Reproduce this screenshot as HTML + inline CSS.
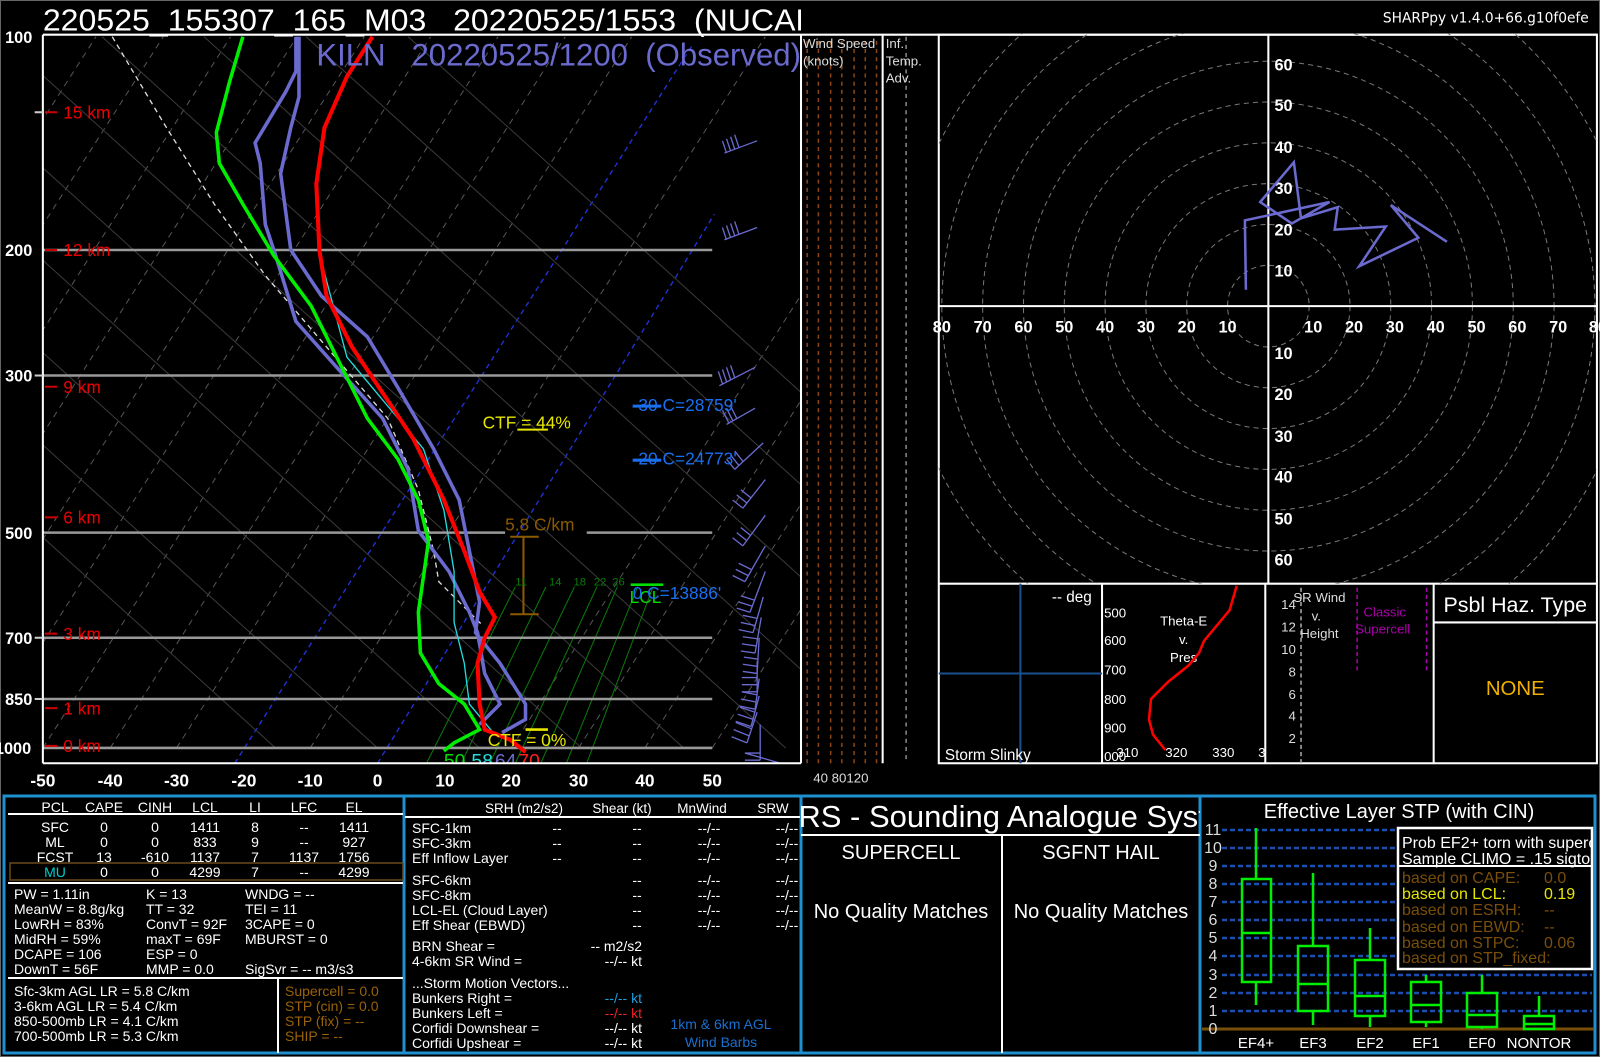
<!DOCTYPE html>
<html><head><meta charset="utf-8"><style>
html,body{margin:0;padding:0;background:#000;}
svg{display:block;font-family:"Liberation Sans",sans-serif;}
</style></head><body>
<svg width="1600" height="1057" viewBox="0 0 1600 1057" xmlns="http://www.w3.org/2000/svg">
<rect width="1600" height="1057" fill="#000"/>
<rect x="0.5" y="0.5" width="1599" height="1056" fill="none" stroke="#666" stroke-width="1"/>
<g transform="scale(1.0204)">
<defs>
<clipPath id="sk"><rect x="42" y="34" width="743" height="714"/></clipPath>
<clipPath id="hd"><rect x="920" y="33" width="645" height="539"/></clipPath>
<clipPath id="hdr"><rect x="0" y="0" width="785" height="40"/></clipPath>
</defs>
<g clip-path="url(#sk)">
<g stroke="#555" stroke-width="1" stroke-dasharray="6,5" fill="none">
<line x1="-417" y1="733" x2="29" y2="36"/><line x1="-352" y1="733" x2="94" y2="36"/>
<line x1="-286" y1="733" x2="160" y2="36"/><line x1="-220" y1="733" x2="226" y2="36"/>
<line x1="-155" y1="733" x2="291" y2="36"/><line x1="-89" y1="733" x2="357" y2="36"/>
<line x1="-24" y1="733" x2="422" y2="36"/><line x1="42" y1="733" x2="488" y2="36"/>
<line x1="108" y1="733" x2="554" y2="36"/><line x1="173" y1="733" x2="619" y2="36"/>
<line x1="304" y1="733" x2="750" y2="36"/>
<line x1="501" y1="733" x2="947" y2="36"/><line x1="567" y1="733" x2="1013" y2="36"/>
<line x1="632" y1="733" x2="1078" y2="36"/><line x1="698" y1="733" x2="1144" y2="36"/>
</g>
<g stroke="#2233dd" stroke-width="1.3" stroke-dasharray="5,4" fill="none">
<line x1="230" y1="748" x2="678" y2="45"/><line x1="370" y1="748" x2="700" y2="210"/>
</g>
<g stroke="#3a3a3a" stroke-width="1" fill="none">
<line x1="-500" y1="36" x2="270" y2="733"/><line x1="-400" y1="36" x2="370" y2="733"/>
<line x1="-300" y1="36" x2="470" y2="733"/><line x1="-200" y1="36" x2="570" y2="733"/>
<line x1="-100" y1="36" x2="670" y2="733"/><line x1="0" y1="36" x2="770" y2="733"/>
<line x1="100" y1="36" x2="870" y2="733"/><line x1="200" y1="36" x2="970" y2="733"/>
<line x1="300" y1="36" x2="1070" y2="733"/><line x1="400" y1="36" x2="1170" y2="733"/>
</g>
<g stroke="#0a7a0a" stroke-width="1" fill="none">
<line x1="418" y1="748" x2="505" y2="575"/><line x1="452" y1="748" x2="535" y2="575"/>
<line x1="480" y1="748" x2="563" y2="575"/><line x1="505" y1="748" x2="585" y2="575"/>
<line x1="530" y1="748" x2="605" y2="575"/><line x1="555" y1="748" x2="625" y2="575"/>
<line x1="575" y1="748" x2="640" y2="575"/>
</g>
<g stroke="#999" stroke-width="2.5">
<line x1="42" y1="245" x2="698" y2="245"/><line x1="42" y1="368" x2="698" y2="368"/>
<line x1="42" y1="522" x2="495" y2="522"/><line x1="575" y1="522" x2="698" y2="522"/>
<line x1="42" y1="625" x2="698" y2="625"/><line x1="42" y1="685" x2="698" y2="685"/>
<line x1="42" y1="733" x2="698" y2="733"/>
</g>
<polyline fill="none" stroke="#ddd" stroke-width="1.3" stroke-dasharray="5,4" points="110,36 160,120 210,200 260,270 320,340 380,410 410,480 425,540 430,570 460,600 472,612"/>
<polyline fill="none" stroke="#6a6acf" stroke-width="3.5" points="290,36 290,70 280,90 250,140 255,160 260,220 270,250 290,315 330,360 375,410 400,460 410,520 440,560 460,600 468,620 475,660 490,690 470,710"/>
<polyline fill="none" stroke="#6a6acf" stroke-width="3.5" points="293,36 293,95 285,125 275,170 285,245 315,290 360,330 390,380 425,440 450,490 460,540 470,590 466,620 490,650 515,690 515,705 492,718"/>
<polyline fill="none" stroke="#22dddd" stroke-width="1.3" points="312,245 340,350 415,440 435,500 445,560 445,610 455,650 460,690 485,720"/>
<polyline fill="none" stroke="#ff0000" stroke-width="4" points="365,36 340,75 318,125 310,180 313,245 320,290 345,340 375,385 405,430 435,490 455,540 470,580 485,605 475,625 468,650 470,690 475,715 500,725 515,737"/>
<polyline fill="none" stroke="#00ee00" stroke-width="3.5" points="238,36 225,80 212,130 215,160 238,200 268,250 305,300 330,350 360,410 390,450 410,490 420,530 410,600 412,640 430,670 455,690 470,715 445,728 435,736"/>
<g stroke="#6a6acf" stroke-width="1.3" fill="none">
<path d="M710,150 L742,138 M712,150 l-4,-12 M716,148 l-4,-12 M720,146 l-4,-12 M724,144 l-4,-12"/>
<path d="M710,235 L742,223 M712,235 l-4,-12 M716,233 l-4,-12 M720,231 l-4,-12 M724,229 l-4,-12"/>
<path d="M705,378 L740,360 M708,376 l-4,-12 M712,374 l-4,-12 M716,372 l-4,-12 M720,370 l-4,-12"/>
<path d="M712,416 L740,400 M714,414 l-6,-12 M718,412 l-6,-12 M722,410 l-6,-12"/>
<path d="M720,460 l28,-26 M720,460 l-8,-10 M724,456 l-8,-10 M728,452 l-8,-10"/>
<path d="M728,498 l22,-28 M728,498 l-10,-8 M732,493 l-10,-8 M736,488 l-10,-8"/>
<path d="M728,535 l22,-30 M728,535 l-10,-8 M732,530 l-10,-8 M736,525 l-10,-8"/>
<path d="M730,570 l20,-35 M730,570 l-12,-6 M733,564 l-12,-6 M736,558 l-12,-6"/>
<path d="M735,600 l15,-40 M735,600 l-13,-4 M737,594 l-13,-4 M739,588 l-13,-4"/>
<path d="M738,620 l10,-35 M738,620 l-14,-3 M740,613 l-14,-3 M742,606 l-14,-3"/>
<path d="M740,640 l6,-35 M740,640 l-14,-2 M741,633 l-14,-2 M742,626 l-14,-2"/>
<path d="M742,660 l2,-35 M742,660 l-14,-2 M742,653 l-14,-2 M743,646 l-14,-2"/>
<path d="M742,678 l0,-30 M742,678 l-15,0 M742,671 l-15,0 M742,664 l-15,0"/>
<path d="M740,695 l4,-30 M740,695 l-15,-3 M741,688 l-15,-3 M742,681 l-15,-3"/>
<path d="M736,712 l8,-30 M736,712 l-15,-5 M738,705 l-15,-5 M740,698 l-15,-5"/>
<path d="M732,728 l10,-30 M732,728 l-15,-6 M734,721 l-15,-6 M736,714 l-15,-6"/>
<path d="M745,745 l0,-35 M745,745 l-15,0 M745,738 l-15,0 L765,748"/>
</g>
<text x="473" y="420" font-size="17" fill="#e6e600">CTF = 44%</text>
<line x1="507" y1="421" x2="537" y2="421" stroke="#e6e600" stroke-width="2"/>
<text x="620" y="403" font-size="17" fill="#1a6ff0">-30 C=28759'</text>
<line x1="620" y1="398" x2="648" y2="398" stroke="#1a6ff0" stroke-width="3"/>
<text x="620" y="455" font-size="17" fill="#1a6ff0">-20 C=24773'</text>
<line x1="620" y1="451" x2="648" y2="451" stroke="#1a6ff0" stroke-width="3"/>
<text x="617" y="591" font-size="17" fill="#00dd00">LCL</text>
<line x1="618" y1="573" x2="650" y2="573" stroke="#00dd00" stroke-width="2.5"/>
<text x="620" y="587" font-size="17" fill="#1a6ff0">0 C=13886'</text>
<text x="495" y="520" font-size="17" fill="#8b5a00">5.8 C/km</text>
<path d="M500,526 H528 M513,526 V602 M500,602 H528" stroke="#8b5a00" stroke-width="2" fill="none"/>
<g font-size="11" fill="#0a7a0a"><text x="505" y="574">11</text><text x="538" y="574">14</text><text x="562" y="574">18</text><text x="582" y="574">22</text><text x="600" y="574">26</text></g>
<line x1="515" y1="715" x2="537" y2="715" stroke="#e6e600" stroke-width="2.5"/>
<text x="478" y="731" font-size="17" fill="#e6e600">CTF = 0%</text>
<text x="435" y="752" font-size="19" fill="#00dd00">50</text>
<text x="462" y="752" font-size="19" fill="#22dddd">58</text>
<text x="485" y="752" font-size="19" fill="#6a6acf">64</text>
<text x="508" y="752" font-size="19" fill="#ff2020">70</text>
<text x="310" y="64" font-size="31" fill="#6a6acf" textLength="475" lengthAdjust="spacingAndGlyphs">KILN&#160;&#160;&#160;20220525/1200&#160;&#160;(Observed)</text>
</g>
<text x="42" y="30" font-size="30" fill="#fff" clip-path="url(#hdr)" textLength="790" lengthAdjust="spacingAndGlyphs">220525_155307_165_M03&#160;&#160;&#160;20220525/1553&#160;&#160;(NUCAPS)</text>
<text x="1557" y="22" font-size="13.5" fill="#fff" text-anchor="end" font-family="DejaVu Sans,sans-serif">SHARPpy v1.4.0+66.g10f0efe</text>
<g stroke="#fff" stroke-width="2" fill="none">
<line x1="42" y1="34" x2="1565" y2="34"/>
<line x1="42" y1="34" x2="42" y2="748"/>
<line x1="42" y1="748" x2="785" y2="748"/>
<line x1="785" y1="34" x2="785" y2="748"/>
<line x1="865" y1="34" x2="865" y2="748"/>
<rect x="920" y="34" width="645" height="714"/>
<line x1="920" y1="572" x2="1565" y2="572"/>
<line x1="1080" y1="572" x2="1080" y2="748"/>
<line x1="1240" y1="572" x2="1240" y2="748"/>
<line x1="1405" y1="572" x2="1405" y2="748"/>
<line x1="1405" y1="610" x2="1565" y2="610"/>
</g>
<g stroke="#ccc" stroke-width="2"><line x1="34" y1="110" x2="42" y2="110"/><line x1="34" y1="368" x2="42" y2="368"/><line x1="34" y1="625" x2="42" y2="625"/><line x1="34" y1="685" x2="42" y2="685"/></g>
<g font-size="16" font-weight="bold" fill="#fff">
<text x="5" y="42">100</text><text x="5" y="251">200</text><text x="5" y="374">300</text><text x="5" y="528">500</text><text x="5" y="631">700</text><text x="5" y="691">850</text><text x="-5" y="739">1000</text>
</g>
<g font-size="17" fill="#ee0000">
<text x="62" y="116">15 km</text><text x="62" y="251">12 km</text><text x="62" y="385">9 km</text><text x="62" y="513">6 km</text><text x="62" y="627">3 km</text><text x="62" y="700">1 km</text><text x="62" y="737">0 km</text>
</g>
<g stroke="#cc0000" stroke-width="2"><line x1="44" y1="110" x2="56" y2="110"/><line x1="44" y1="245" x2="56" y2="245"/><line x1="44" y1="379" x2="56" y2="379"/><line x1="44" y1="507" x2="56" y2="507"/><line x1="44" y1="621" x2="56" y2="621"/><line x1="44" y1="694" x2="56" y2="694"/><line x1="44" y1="731" x2="56" y2="731"/></g>
<g font-size="17" font-weight="bold" fill="#fff" text-anchor="middle">
<text x="42" y="771">-50</text><text x="108" y="771">-40</text><text x="173" y="771">-30</text><text x="239" y="771">-20</text><text x="304" y="771">-10</text><text x="370" y="771">0</text><text x="436" y="771">10</text><text x="501" y="771">20</text><text x="567" y="771">30</text><text x="632" y="771">40</text><text x="698" y="771">50</text>
</g>
<g stroke="#8b4513" stroke-width="1.5" stroke-dasharray="4,4">
<line x1="791" y1="40" x2="791" y2="748"/><line x1="802" y1="40" x2="802" y2="748"/><line x1="814" y1="40" x2="814" y2="748"/><line x1="825" y1="40" x2="825" y2="748"/><line x1="837" y1="40" x2="837" y2="748"/><line x1="848" y1="40" x2="848" y2="748"/><line x1="859" y1="40" x2="859" y2="748"/>
</g>
<line x1="888" y1="36" x2="888" y2="748" stroke="#888" stroke-width="1.5" stroke-dasharray="4,4"/>
<g font-size="13" fill="#ddd"><text x="787" y="47">Wind Speed</text><text x="787" y="64">(knots)</text><text x="868" y="47">Inf.</text><text x="868" y="64">Temp.</text><text x="868" y="81">Adv.</text><text x="797" y="767">40  80120</text></g>
<g clip-path="url(#hd)">
<g fill="none" stroke="#777" stroke-width="1" stroke-dasharray="5,4">
<circle cx="1243" cy="300" r="40"/><circle cx="1243" cy="300" r="80"/><circle cx="1243" cy="300" r="120"/><circle cx="1243" cy="300" r="160"/><circle cx="1243" cy="300" r="200"/><circle cx="1243" cy="300" r="240"/><circle cx="1243" cy="300" r="280"/><circle cx="1243" cy="300" r="320"/><circle cx="1243" cy="300" r="360"/>
</g>
</g>
<g stroke="#fff" stroke-width="2"><line x1="1243" y1="34" x2="1243" y2="572"/><line x1="920" y1="300" x2="1565" y2="300"/></g>
<g font-size="16" font-weight="bold" fill="#fff">
<text x="1249" y="69">60</text><text x="1249" y="109">50</text><text x="1249" y="150">40</text><text x="1249" y="190">30</text><text x="1249" y="231">20</text><text x="1249" y="271">10</text>
<text x="1249" y="352">10</text><text x="1249" y="392">20</text><text x="1249" y="433">30</text><text x="1249" y="473">40</text><text x="1249" y="514">50</text><text x="1249" y="554">60</text>
</g>
<g font-size="16" font-weight="bold" fill="#fff" text-anchor="middle">
<text x="923" y="326">80</text><text x="963" y="326">70</text><text x="1003" y="326">60</text><text x="1043" y="326">50</text><text x="1083" y="326">40</text><text x="1123" y="326">30</text><text x="1163" y="326">20</text><text x="1203" y="326">10</text>
<text x="1287" y="326">10</text><text x="1327" y="326">20</text><text x="1367" y="326">30</text><text x="1407" y="326">40</text><text x="1447" y="326">50</text><text x="1487" y="326">60</text><text x="1527" y="326">70</text><text x="1566" y="326">80</text>
</g>
<polyline fill="none" stroke="#6a6acf" stroke-width="2.5" points="1221,284 1220,216 1303,198 1266,219 1235,198 1268,159 1275,214 1311,203 1308,225 1358,222 1332,261 1390,233 1363,201 1418,237"/>
<g stroke="#1a4f8f" stroke-width="2"><line x1="1000" y1="572" x2="1000" y2="748"/><line x1="920" y1="660" x2="1080" y2="660"/></g>
<text x="1070" y="590" font-size="15" fill="#fff" text-anchor="end">-- deg</text>
<text x="926" y="745" font-size="15" fill="#fff">Storm Slinky</text>
<g font-size="13" fill="#fff"><text x="1082" y="605">500</text><text x="1082" y="632">600</text><text x="1082" y="661">700</text><text x="1082" y="690">800</text><text x="1082" y="718">900</text><text x="1082" y="746">000</text>
<text x="1094" y="742">310</text><text x="1142" y="742">320</text><text x="1188" y="742">330</text><text x="1233" y="742">3</text></g>
<g font-size="13" fill="#fff" text-anchor="middle"><text x="1160" y="613">Theta-E</text><text x="1160" y="631">v.</text><text x="1160" y="649">Pres</text></g>
<polyline fill="none" stroke="#f00" stroke-width="2.5" points="1212,574 1205,598 1180,628 1175,640 1165,652 1145,668 1128,685 1126,705 1130,720 1142,735"/>
<g stroke="#aaa" stroke-width="1.5" stroke-dasharray="4,3"><line x1="1275" y1="576" x2="1275" y2="748"/></g>
<g stroke="#aa00aa" stroke-width="1.5" stroke-dasharray="4,3"><line x1="1330" y1="576" x2="1330" y2="658"/><line x1="1398" y1="576" x2="1398" y2="658"/></g>
<g font-size="13" fill="#ddd" text-anchor="end"><text x="1270" y="597">14</text><text x="1270" y="619">12</text><text x="1270" y="641">10</text><text x="1270" y="663">8</text><text x="1270" y="685">6</text><text x="1270" y="706">4</text><text x="1270" y="728">2</text></g>
<g font-size="13" fill="#ddd" text-anchor="middle"><text x="1293" y="590">SR Wind</text><text x="1290" y="608">v.</text><text x="1293" y="625">Height</text></g>
<g font-size="13" fill="#aa00aa" text-anchor="middle"><text x="1357" y="604">Classic</text><text x="1355" y="621">Supercell</text></g>
<text x="1485" y="600" font-size="21" fill="#fff" text-anchor="middle">Psbl Haz. Type</text>
<text x="1485" y="681" font-size="20" fill="#f0b000" text-anchor="middle">NONE</text>
</g>

<g fill="none" stroke="#1e90d0" stroke-width="3">
<rect x="4" y="796" width="1591" height="257"/>
<line x1="404" y1="796" x2="404" y2="1053"/><line x1="801" y1="796" x2="801" y2="1053"/><line x1="1200" y1="796" x2="1200" y2="1053"/>
</g>
<g stroke="#fff" stroke-width="2">
<line x1="8" y1="814" x2="403" y2="814"/><line x1="8" y1="883" x2="403" y2="883"/><line x1="8" y1="978" x2="403" y2="978"/><line x1="278" y1="978" x2="278" y2="1053"/>
<line x1="405" y1="817" x2="800" y2="817"/>
<line x1="801" y1="835" x2="1200" y2="835"/><line x1="1002" y1="835" x2="1002" y2="1053"/>
</g>
<rect x="10" y="863" width="393" height="17" fill="none" stroke="#6b4a1a" stroke-width="1.5"/>
<g font-size="14" fill="#fff" text-anchor="middle">
<text x="55" y="812">PCL</text><text x="104" y="812">CAPE</text><text x="155" y="812">CINH</text><text x="205" y="812">LCL</text><text x="255" y="812">LI</text><text x="304" y="812">LFC</text><text x="354" y="812">EL</text>
<text x="55" y="832">SFC</text><text x="104" y="832">0</text><text x="155" y="832">0</text><text x="205" y="832">1411</text><text x="255" y="832">8</text><text x="304" y="832">--</text><text x="354" y="832">1411</text>
<text x="55" y="847">ML</text><text x="104" y="847">0</text><text x="155" y="847">0</text><text x="205" y="847">833</text><text x="255" y="847">9</text><text x="304" y="847">--</text><text x="354" y="847">927</text>
<text x="55" y="862">FCST</text><text x="104" y="862">13</text><text x="155" y="862">-610</text><text x="205" y="862">1137</text><text x="255" y="862">7</text><text x="304" y="862">1137</text><text x="354" y="862">1756</text>
<text x="55" y="877" fill="#00cccc">MU</text><text x="104" y="877">0</text><text x="155" y="877">0</text><text x="205" y="877">4299</text><text x="255" y="877">7</text><text x="304" y="877">--</text><text x="354" y="877">4299</text>
</g>
<g font-size="14" fill="#fff">
<text x="14" y="899">PW = 1.11in</text><text x="146" y="899">K = 13</text><text x="245" y="899">WNDG = --</text>
<text x="14" y="914">MeanW = 8.8g/kg</text><text x="146" y="914">TT = 32</text><text x="245" y="914">TEI = 11</text>
<text x="14" y="929">LowRH = 83%</text><text x="146" y="929">ConvT = 92F</text><text x="245" y="929">3CAPE = 0</text>
<text x="14" y="944">MidRH = 59%</text><text x="146" y="944">maxT = 69F</text><text x="245" y="944">MBURST = 0</text>
<text x="14" y="959">DCAPE = 106</text><text x="146" y="959">ESP = 0</text>
<text x="14" y="974">DownT = 56F</text><text x="146" y="974">MMP = 0.0</text><text x="245" y="974">SigSvr = -- m3/s3</text>
<text x="14" y="996">Sfc-3km AGL LR = 5.8 C/km</text><text x="14" y="1011">3-6km AGL LR = 5.4 C/km</text><text x="14" y="1026">850-500mb LR = 4.1 C/km</text><text x="14" y="1041">700-500mb LR = 5.3 C/km</text>
</g>
<g font-size="14" fill="#9a6208"><text x="285" y="996">Supercell = 0.0</text><text x="285" y="1011">STP (cin) = 0.0</text><text x="285" y="1026">STP (fix) = --</text><text x="285" y="1041">SHIP = --</text></g>
<g font-size="13.5" fill="#fff" text-anchor="middle">
<text x="524" y="813">SRH (m2/s2)</text><text x="622" y="813">Shear (kt)</text><text x="702" y="813">MnWind</text><text x="773" y="813">SRW</text>
</g>
<g font-size="14" fill="#fff">
<text x="412" y="833">SFC-1km</text><text x="412" y="848">SFC-3km</text><text x="412" y="863">Eff Inflow Layer</text>
<text x="412" y="885">SFC-6km</text><text x="412" y="900">SFC-8km</text><text x="412" y="915">LCL-EL (Cloud Layer)</text><text x="412" y="930">Eff Shear (EBWD)</text>
<text x="412" y="951">BRN Shear =</text><text x="412" y="966">4-6km SR Wind =</text>
<text x="412" y="988">...Storm Motion Vectors...</text><text x="412" y="1003">Bunkers Right =</text><text x="412" y="1018">Bunkers Left =</text><text x="412" y="1033">Corfidi Downshear =</text><text x="412" y="1048">Corfidi Upshear =</text>
</g>
<g font-size="14" fill="#fff" text-anchor="middle">
<text x="557" y="833">--</text><text x="637" y="833">--</text><text x="709" y="833">--/--</text><text x="787" y="833">--/--</text>
<text x="557" y="848">--</text><text x="637" y="848">--</text><text x="709" y="848">--/--</text><text x="787" y="848">--/--</text>
<text x="557" y="863">--</text><text x="637" y="863">--</text><text x="709" y="863">--/--</text><text x="787" y="863">--/--</text>
<text x="637" y="885">--</text><text x="709" y="885">--/--</text><text x="787" y="885">--/--</text>
<text x="637" y="900">--</text><text x="709" y="900">--/--</text><text x="787" y="900">--/--</text>
<text x="637" y="915">--</text><text x="709" y="915">--/--</text><text x="787" y="915">--/--</text>
<text x="637" y="930">--</text><text x="709" y="930">--/--</text><text x="787" y="930">--/--</text>
</g>
<g font-size="14" fill="#fff" text-anchor="end">
<text x="642" y="951">-- m2/s2</text><text x="642" y="966">--/-- kt</text>
<text x="642" y="1003" fill="#1a9fe0">--/-- kt</text><text x="642" y="1018" fill="#ee2222">--/-- kt</text>
<text x="642" y="1033">--/-- kt</text><text x="642" y="1048">--/-- kt</text>
</g>
<g font-size="14" fill="#1a6fcf" text-anchor="middle"><text x="721" y="1029">1km &amp; 6km AGL</text><text x="721" y="1047">Wind Barbs</text></g>
<svg x="801" y="796" width="399" height="40"><text x="-44" y="31" font-size="31" fill="#fff">SARS - Sounding Analogue System</text></svg>
<g font-size="20" fill="#fff" text-anchor="middle">
<text x="901" y="859">SUPERCELL</text><text x="1101" y="859">SGFNT HAIL</text>
<text x="901" y="918">No Quality Matches</text><text x="1101" y="918">No Quality Matches</text>
</g>
<text x="1399" y="818" font-size="20" fill="#fff" text-anchor="middle">Effective Layer STP (with CIN)</text>
<g stroke="#1a4faf" stroke-width="2.5" stroke-dasharray="5,3">
<line x1="1222" y1="830" x2="1592" y2="830"/><line x1="1222" y1="848" x2="1592" y2="848"/><line x1="1222" y1="866" x2="1592" y2="866"/><line x1="1222" y1="884" x2="1592" y2="884"/><line x1="1222" y1="902" x2="1592" y2="902"/><line x1="1222" y1="920" x2="1592" y2="920"/><line x1="1222" y1="938" x2="1592" y2="938"/><line x1="1222" y1="956" x2="1592" y2="956"/><line x1="1222" y1="975" x2="1592" y2="975"/><line x1="1222" y1="993" x2="1592" y2="993"/><line x1="1222" y1="1011" x2="1592" y2="1011"/>
</g>
<line x1="1202" y1="1029" x2="1594" y2="1029" stroke="#7a4f0a" stroke-width="3"/>
<g font-size="16" fill="#ddd" text-anchor="middle">
<text x="1213" y="835">11</text><text x="1213" y="853">10</text><text x="1213" y="871">9</text><text x="1213" y="889">8</text><text x="1213" y="907">7</text><text x="1213" y="925">6</text><text x="1213" y="943">5</text><text x="1213" y="961">4</text><text x="1213" y="980">3</text><text x="1213" y="998">2</text><text x="1213" y="1016">1</text><text x="1213" y="1034">0</text>
</g>
<g stroke="#00ee00" stroke-width="2.5" fill="none">
<path d="M1256,1005 V982 M1256,879 V828 M1242,982 H1271 V879 H1242 Z M1242,933 H1271"/>
<path d="M1313,1025 V1011 M1313,946 V873 M1298,1011 H1328 V946 H1298 Z M1298,984 H1328"/>
<path d="M1370,1027 V1016 M1370,960 V928 M1355,1016 H1385 V960 H1355 Z M1355,996 H1385"/>
<path d="M1426,1027 V1022 M1426,982 V975 M1411,1022 H1441 V982 H1411 Z M1411,1005 H1441"/>
<path d="M1482,1029 V1027 M1482,993 V975 M1467,1027 H1497 V993 H1467 Z M1467,1015 H1497"/>
<path d="M1539,1016 V996 M1524,1029 H1554 V1016 H1524 Z M1524,1024 H1554"/>
</g>
<g font-size="15" fill="#fff" text-anchor="middle"><text x="1256" y="1048">EF4+</text><text x="1313" y="1048">EF3</text><text x="1370" y="1048">EF2</text><text x="1426" y="1048">EF1</text><text x="1482" y="1048">EF0</text><text x="1539" y="1048">NONTOR</text></g>
<rect x="1398" y="828" width="194" height="141" fill="#000" stroke="#fff" stroke-width="2.5"/>
<line x1="1398" y1="866" x2="1592" y2="866" stroke="#fff" stroke-width="2"/>
<svg x="1399" y="829" width="192" height="140">
<g font-size="16">
<text x="3" y="19" fill="#fff">Prob EF2+ torn with supercell</text>
<text x="3" y="35" fill="#fff">Sample CLIMO = .15 sigtor</text>
<text x="3" y="54" fill="#7a4f0a">based on CAPE:</text><text x="145" y="54" fill="#7a4f0a">0.0</text>
<text x="3" y="70" fill="#e6e600">based on LCL:</text><text x="145" y="70" fill="#e6e600">0.19</text>
<text x="3" y="86" fill="#7a4f0a">based on ESRH:</text><text x="145" y="86" fill="#7a4f0a">--</text>
<text x="3" y="103" fill="#7a4f0a">based on EBWD:</text><text x="145" y="103" fill="#7a4f0a">--</text>
<text x="3" y="119" fill="#7a4f0a">based on STPC:</text><text x="145" y="119" fill="#7a4f0a">0.06</text>
<text x="3" y="134" fill="#7a4f0a">based on STP_fixed:</text>
</g></svg>
</svg>
</body></html>
